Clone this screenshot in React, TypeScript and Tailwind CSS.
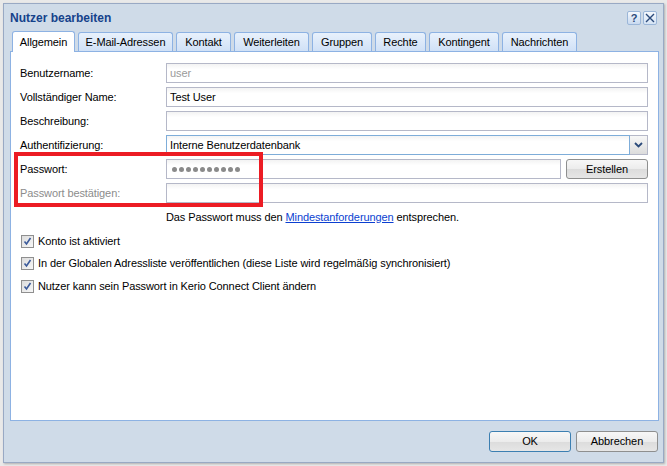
import React from "react";

// ─── Data ────────────────────────────────────────────────────────────────────

const TABS: { label: string; w: string; active?: boolean }[] = [
  { label: "Allgemein", w: "w-[63px]", active: true },
  { label: "E-Mail-Adressen", w: "w-[95px]" },
  { label: "Kontakt", w: "w-[55px]" },
  { label: "Weiterleiten", w: "w-[75px]" },
  { label: "Gruppen", w: "w-[60px]" },
  { label: "Rechte", w: "w-[51px]" },
  { label: "Kontingent", w: "w-[70px]" },
  { label: "Nachrichten", w: "w-[75px]" },
];

const CHECKS = [
  "Konto ist aktiviert",
  "In der Globalen Adressliste veröffentlichen (diese Liste wird regelmäßig synchronisiert)",
  "Nutzer kann sein Passwort in Kerio Connect Client ändern",
];

// ─── Sub-components ──────────────────────────────────────────────────────────

function TextField({ value, muted, className = "" }: { value?: string; muted?: boolean; className?: string }) {
  return (
    <div
      className={[
        "flex h-[20px] items-center border border-[#b5b8c8] bg-gradient-to-b from-[#f3f3f3] to-white to-[30%] px-[3px]",
        muted ? "text-[#9a9a9a]" : "text-black",
        className,
      ].join(" ")}
    >
      {value}
    </div>
  );
}

function Row({ label, muted, children }: { label: string; muted?: boolean; children: React.ReactNode }) {
  return (
    <div className="flex h-[20px] items-center">
      <div className={["w-[146px] shrink-0", muted ? "text-[#8c8c8c]" : "text-black"].join(" ")}>{label}</div>
      <div className="flex flex-1 gap-[5px]">{children}</div>
    </div>
  );
}

function Button({ label, focused, className = "" }: { label: string; focused?: boolean; className?: string }) {
  return (
    <div
      className={[
        "flex items-center justify-center rounded-[3px] border bg-[linear-gradient(to_bottom,#f7f7f7_0%,#ececec_50%,#dcdcdc_51%,#e6e6e6_100%)]",
        focused ? "border-[#3c7fb1]" : "border-[#8e8f8f]",
        className,
      ].join(" ")}
    >
      {label}
    </div>
  );
}

function CheckBox() {
  return (
    <div className="flex h-[13px] w-[13px] items-center justify-center border border-[#8f8f8f] bg-gradient-to-br from-[#dcdcdc] to-[#f7f7f7]">
      <svg width="9" height="9" viewBox="0 0 9 9">
        <path d="M1.5 4.5 L3.5 7 L7.5 1" fill="none" stroke="#3b5a9a" strokeWidth="1.6" />
      </svg>
    </div>
  );
}

// ─── Main component ──────────────────────────────────────────────────────────

export default function App() {
  return (
    <div
      className="h-[466px] w-[667px] overflow-hidden bg-[#e9e9e9] pl-[3px] pt-[3px] text-[11px] tracking-[-0.1px]"
      style={{ fontFamily: "'Liberation Sans', Arial, sans-serif" }}
    >
      <div className="relative flex h-[460px] w-[661px] flex-col border border-[#99a9c4] bg-[#cfdbe8] shadow-[1px_1px_2px_rgba(0,0,0,0.25)]">
        {/* ── Title bar ───────────────────────────────────────────────── */}
        <div className="flex h-[27px] items-center justify-between pl-[6px] pr-[6px]">
          <span className="text-[12px] font-bold tracking-normal text-[#15428b]">Nutzer bearbeiten</span>
          <div className="flex gap-[2px] pt-[1px]">
            <div className="flex h-[14px] w-[14px] items-center justify-center rounded-[2px] border border-[#9bb6d8] bg-gradient-to-b from-[#f4f8fd] to-[#c9daf0] text-[11px] font-bold leading-none text-[#2b4a7a]">
              ?
            </div>
            <div className="flex h-[14px] w-[14px] items-center justify-center rounded-[2px] border border-[#9bb6d8] bg-gradient-to-b from-[#f4f8fd] to-[#d6e4f5]">
              <svg width="10" height="10" viewBox="0 0 10 10">
                <path d="M1 1 L9 9 M9 1 L1 9" stroke="#2b4a7a" strokeWidth="1.4" />
              </svg>
            </div>
          </div>
        </div>

        {/* ── Tabs ────────────────────────────────────────────────────── */}
        <div className="ml-[7px] flex h-[21px] gap-[3px] pl-[1px]">
          {TABS.map((t) => (
            <div
              key={t.label}
              className={[
                "flex items-center justify-center rounded-t-[3px] border border-b-0 border-[#8db2e3] text-black",
                t.w,
                t.active
                  ? "relative z-10 h-[21px] bg-white"
                  : "mt-[1px] h-[20px] bg-gradient-to-b from-[#e8f1fc] to-[#cfe0f6] text-[#222]",
              ].join(" ")}
            >
              {t.label}
            </div>
          ))}
        </div>

        {/* ── Panel ───────────────────────────────────────────────────── */}
        <div className="ml-[6px] mr-[4px] mt-[-1px] flex h-[370px] flex-col border border-[#8db2e3] bg-white px-[9px] pt-[11px]">
          <div className="flex flex-col gap-[4px] pr-[1px]">
            <Row label="Benutzername:">
              <TextField value="user" muted className="flex-1" />
            </Row>
            <Row label="Vollständiger Name:">
              <TextField value="Test User" className="flex-1" />
            </Row>
            <Row label="Beschreibung:">
              <TextField className="flex-1" />
            </Row>
            <Row label="Authentifizierung:">
              <div className="flex h-[20px] flex-1">
                <div className="flex flex-1 items-center border border-[#7eadd9] bg-gradient-to-b from-[#f3f3f3] to-white to-[30%] px-[3px]">
                  Interne Benutzerdatenbank
                </div>
                <div className="flex w-[18px] items-center justify-center border border-l-0 border-[#b5b8c8] bg-gradient-to-b from-[#f7f7f7] to-[#dcdcdc]">
                  <svg width="9" height="6" viewBox="0 0 9 6">
                    <path d="M1 1 L4.5 4.5 L8 1" fill="none" stroke="#2b4a7a" strokeWidth="1.8" />
                  </svg>
                </div>
              </div>
            </Row>
            <Row label="Passwort:">
              <div className="flex h-[20px] flex-1 items-center gap-[2px] border border-[#b5b8c8] bg-gradient-to-b from-[#f3f3f3] to-white to-[30%] px-[5px]">
                {Array.from({ length: 10 }).map((_, i) => (
                  <span key={i} className="h-[5px] w-[5px] rounded-full bg-[#8a8a8a]" />
                ))}
              </div>
              <Button label="Erstellen" className="h-[20px] w-[82px]" />
            </Row>
            <Row label="Passwort bestätigen:" muted>
              <TextField className="flex-1" />
            </Row>
          </div>

          <div className="mt-[6px] pl-[146px] text-black">
            Das Passwort muss den{" "}
            <span className="text-[#0b3fd1] underline">Mindestanforderungen</span> entsprechen.
          </div>

          <div className="mt-[9px] flex flex-col gap-[9.5px] pl-[1px]">
            {CHECKS.map((c) => (
              <div key={c} className="flex h-[13px] items-center gap-[4px] text-black">
                <CheckBox />
                <span>{c}</span>
              </div>
            ))}
          </div>
        </div>

        {/* ── Footer buttons ──────────────────────────────────────────── */}
        <div className="mr-[5px] mt-[10px] flex justify-end gap-[5px]">
          <Button label="OK" focused className="h-[21px] w-[82px]" />
          <Button label="Abbrechen" className="h-[21px] w-[82px]" />
        </div>

        {/* ── Red highlight (annotation overlay) ─────────────────────── */}
        <div className="absolute left-[10px] top-[148px] h-[55px] w-[249px] border-[4px] border-[#ec1c24]" />
      </div>
    </div>
  );
}
